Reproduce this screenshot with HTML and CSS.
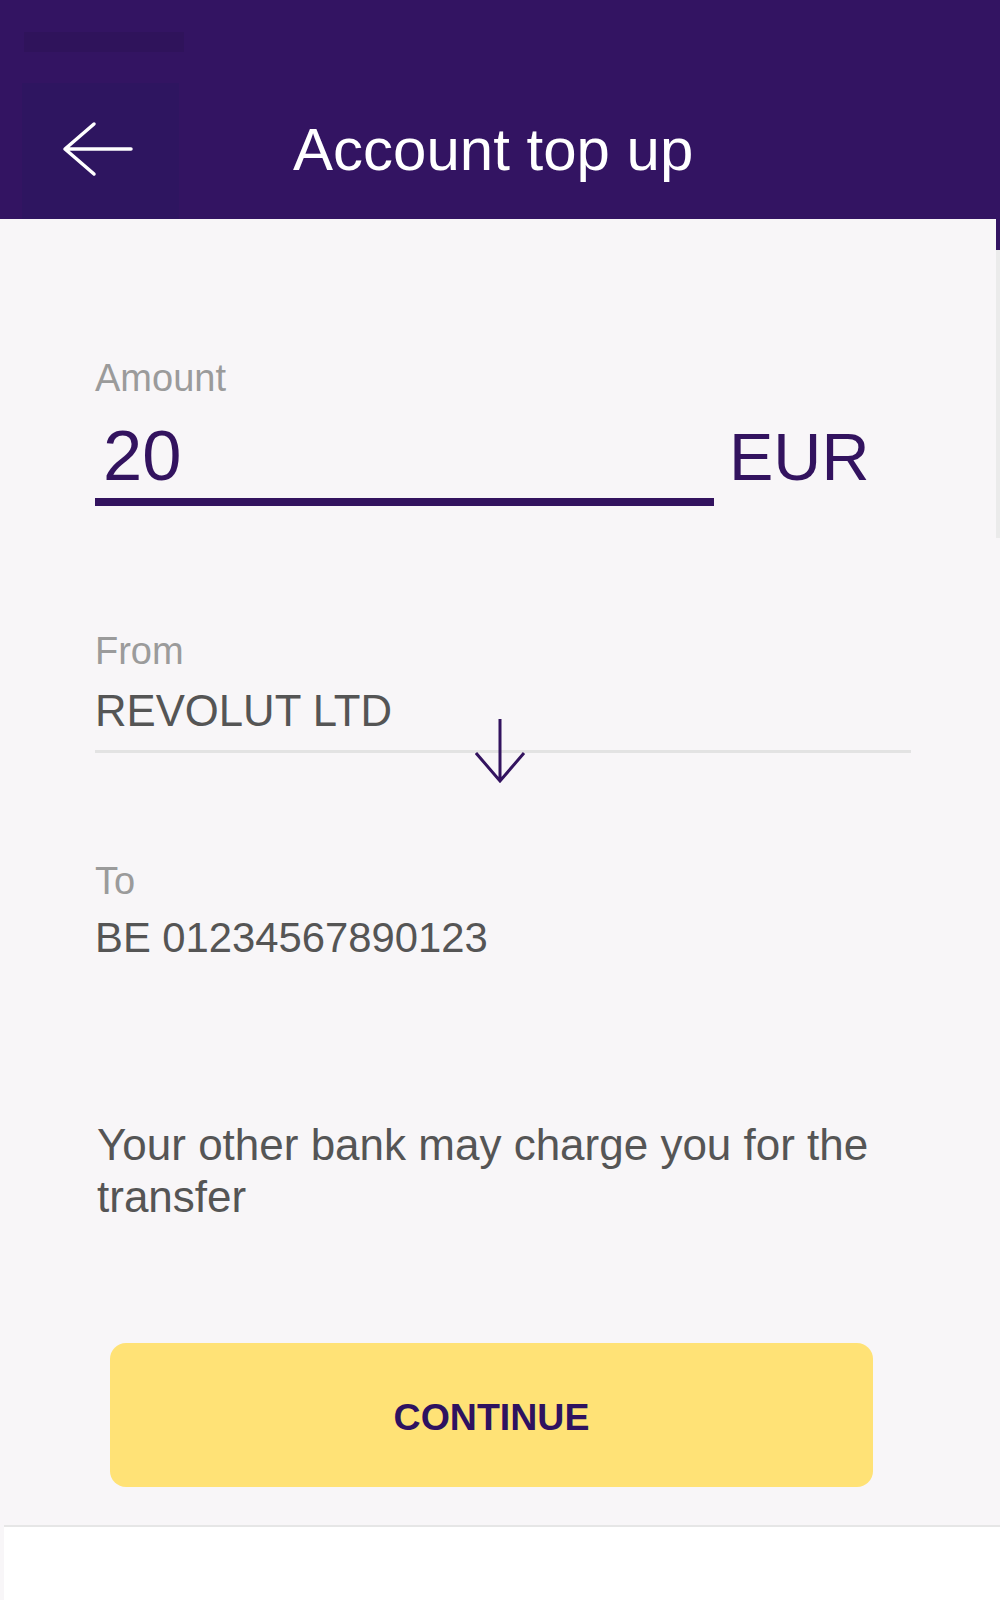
FILE: index.html
```html
<!DOCTYPE html>
<html lang="en">
<head>
<meta charset="utf-8">
<title>Account top up</title>
<link rel="stylesheet" href="styles.css">
</head>
<body>
<header class="appbar">
  <div class="status-ghost"></div>
  <div class="appbar-row">
    <button class="back" aria-label="Back">
      <svg width="157" height="136" viewBox="0 0 157 136">
        <path d="M109 66 H44 M72 41 L43 66 L72 91" fill="none" stroke="#ffffff" stroke-width="3.5" stroke-linecap="round" stroke-linejoin="round"/>
      </svg>
    </button>
    <h1 class="title">Account top up</h1>
  </div>
</header>

<div class="main">
  <div class="content">
    <p class="label">Amount</p>
    <div class="amount-row">
      <div class="amount-input">20</div>
      <div class="currency">EUR</div>
    </div>

    <div class="field field-from">
      <p class="label">From</p>
      <div class="value select">REVOLUT LTD</div>
      <svg class="swap-arrow" width="52" height="66" viewBox="0 0 52 66">
        <path d="M25 1 V63 M1 35 L25 63 L49 35" fill="none" stroke="#33135f" stroke-width="3" stroke-linejoin="miter"/>
      </svg>
    </div>

    <div class="field field-to">
      <p class="label">To</p>
      <div class="value iban">BE 01234567890123</div>
    </div>

    <p class="note">Your other bank may charge you for the transfer</p>

    <button class="continue">CONTINUE</button>
  </div>
  <div class="scroll">
    <div class="thumb"></div>
    <div class="track"></div>
  </div>
</div>

<footer class="bottom"></footer>
</body>
</html>
```

FILE: styles.css
```css
html, body {
  margin: 0;
  padding: 0;
}

body {
  width: 1000px;
  height: 1600px;
  overflow: hidden;
  background: #f8f6f8;
  font-family: "Liberation Sans", Arial, sans-serif;
}

/* Header */
.appbar {
  height: 219px;
  background: #331462;
  display: flex;
  flex-direction: column;
}

.status-ghost {
  margin: 32px 0 0 24px;
  width: 160px;
  height: 20px;
  background: #2f135b;
}

.appbar-row {
  margin-top: 31px;
  height: 136px;
  display: flex;
  align-items: flex-start;
}

.back {
  width: 157px;
  height: 136px;
  margin-left: 22px;
  padding: 0;
  border: 0;
  background: #2e1560;
  display: block;
}

.back svg {
  display: block;
}

.title {
  margin: 37px 0 0 114px;
  font-size: 60px;
  line-height: 60px;
  font-weight: normal;
  color: #ffffff;
}

/* Main */
.main {
  display: flex;
  height: 1306px;
}

.content {
  flex: 1;
  padding: 137px 0 0 95px;
}

.scroll {
  width: 4px;
  display: flex;
  flex-direction: column;
}

.thumb {
  height: 31px;
  background: #331462;
}

.track {
  height: 288px;
  background: #ebebeb;
}

.label {
  margin: 0;
  font-size: 38px;
  line-height: 44px;
  color: #9b9b9b;
}

.amount-row {
  display: flex;
  align-items: baseline;
  margin-top: 15px;
}

.amount-input {
  width: 619px;
  box-sizing: border-box;
  padding: 0 0 1px 8px;
  border-bottom: 8px solid #33135f;
  font-size: 70.5px;
  line-height: 82px;
  color: #33135f;
}

.currency {
  margin-left: 15px;
  font-size: 66.5px;
  line-height: 75px;
  color: #33135f;
}

.field {
  position: relative;
}

.field-from {
  margin-top: 123px;
}

.field-to {
  margin-top: 106px;
}

.value {
  color: #555555;
}

.select {
  margin-top: 13px;
  width: 816px;
  box-sizing: border-box;
  padding-bottom: 14px;
  border-bottom: 3px solid #e3e3e3;
  font-size: 43.7px;
  line-height: 50px;
}

.swap-arrow {
  position: absolute;
  left: 380px;
  top: 89px;
}

.iban {
  margin-top: 10px;
  font-size: 41.8px;
  line-height: 50px;
}

.note {
  margin: 156px 0 0 2px;
  width: 810px;
  font-size: 44px;
  line-height: 52px;
  color: #555555;
}

.continue {
  display: block;
  margin: 120px 0 0 15px;
  width: 763px;
  height: 144px;
  padding: 4px 0 0;
  border: 0;
  border-radius: 16px;
  background: #ffe276;
  font-family: "Liberation Sans", Arial, sans-serif;
  font-size: 37.5px;
  font-weight: bold;
  color: #2e1260;
}

/* Bottom */
.bottom {
  margin-left: 4px;
  height: 73px;
  border-top: 2px solid #e6e6e6;
  background: #ffffff;
}
```
